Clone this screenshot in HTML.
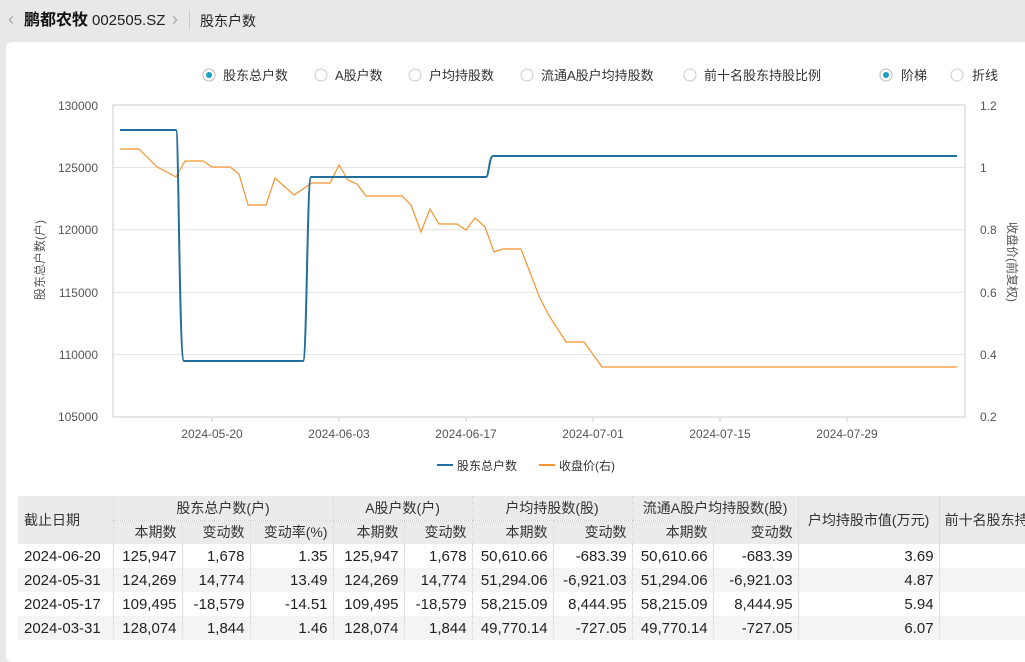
<!DOCTYPE html>
<html><head><meta charset="utf-8"><style>
body{margin:0;width:1025px;height:642px;overflow:hidden;background:#e8e8e8;font-family:"Liberation Sans","Noto Sans CJK SC",sans-serif;position:relative}
.top{position:absolute;left:0;top:0;height:42px;width:1025px}
.card{position:absolute;left:6px;top:42px;width:1030px;height:620px;background:#fff;border-radius:6px}
svg{position:absolute;left:0;top:0}
table{position:absolute;left:18px;top:496px;width:1021px;border-collapse:collapse;font-size:15px;color:#222;table-layout:fixed}
td{height:24px;padding:0 5px;text-align:right;white-space:nowrap;overflow:hidden;border-left:1px dotted #ccc;box-sizing:border-box}
td:first-child{border-left:none;text-align:left;padding-left:6px}
thead td{background:#ebebeb;color:#333;text-align:center;font-size:14px}
thead tr.s td{text-align:right}
tbody tr:nth-child(even) td{background:#f4f4f4}
</style></head><body>
<div class="top">
<span style="position:absolute;left:8px;top:9px;color:#aaa;font-size:18px;line-height:20px">‹</span>
<span style="position:absolute;left:24px;top:11px;font-size:16px;font-weight:bold;color:#111;line-height:20px">鹏都农牧</span>
<span style="position:absolute;left:92px;top:11px;font-size:15px;color:#222;line-height:20px">002505.SZ</span>
<span style="position:absolute;left:172px;top:9px;color:#aaa;font-size:18px;line-height:20px">›</span>
<div style="position:absolute;left:189px;top:10px;width:1px;height:20px;background:#ccc"></div>
<span style="position:absolute;left:200px;top:11px;font-size:14px;color:#222;line-height:20px">股东户数</span>
</div>
<div class="card"></div>
<svg width="1025" height="642" font-family="Liberation Sans, Noto Sans CJK SC, sans-serif">
<g font-size="13" fill="#333">
<circle cx="209" cy="75" r="6" fill="#fff" stroke="#bbb"/><circle cx="209" cy="75" r="3" fill="#1aa0c0"/><text x="223" y="80">股东总户数</text>
<circle cx="321" cy="75" r="6" fill="#fff" stroke="#ccc"/><text x="335" y="80">A股户数</text>
<circle cx="415" cy="75" r="6" fill="#fff" stroke="#ccc"/><text x="429" y="80">户均持股数</text>
<circle cx="527" cy="75" r="6" fill="#fff" stroke="#ccc"/><text x="541" y="80">流通A股户均持股数</text>
<circle cx="690" cy="75" r="6" fill="#fff" stroke="#ccc"/><text x="704" y="80">前十名股东持股比例</text>
<circle cx="886" cy="75" r="6" fill="#fff" stroke="#bbb"/><circle cx="886" cy="75" r="3" fill="#1aa0c0"/><text x="901" y="80">阶梯</text>
<circle cx="957" cy="75" r="6" fill="#fff" stroke="#ccc"/><text x="972" y="80">折线</text>
</g>
<g stroke="#e3e3e3"><line x1="113" y1="167.4" x2="965" y2="167.4"/><line x1="113" y1="229.8" x2="965" y2="229.8"/><line x1="113" y1="292.2" x2="965" y2="292.2"/><line x1="113" y1="354.6" x2="965" y2="354.6"/></g>
<rect x="113" y="105" width="852" height="312" fill="none" stroke="#ccc"/>
<g stroke="#ccc"><line x1="212" y1="417" x2="212" y2="422"/><line x1="339" y1="417" x2="339" y2="422"/><line x1="466" y1="417" x2="466" y2="422"/><line x1="593" y1="417" x2="593" y2="422"/><line x1="720" y1="417" x2="720" y2="422"/><line x1="847" y1="417" x2="847" y2="422"/></g>
<g font-size="12" fill="#555" text-anchor="end">
<text x="98" y="110">130000</text><text x="98" y="172">125000</text><text x="98" y="234">120000</text><text x="98" y="297">115000</text><text x="98" y="359">110000</text><text x="98" y="421">105000</text></g>
<g font-size="12" fill="#555">
<text x="980" y="110">1.2</text><text x="980" y="172">1</text><text x="980" y="234">0.8</text><text x="980" y="297">0.6</text><text x="980" y="359">0.4</text><text x="980" y="421">0.2</text></g>
<g font-size="12" fill="#555" text-anchor="middle">
<text x="212" y="438">2024-05-20</text><text x="339" y="438">2024-06-03</text><text x="466" y="438">2024-06-17</text><text x="593" y="438">2024-07-01</text><text x="720" y="438">2024-07-15</text><text x="847" y="438">2024-07-29</text></g>
<text font-size="12" fill="#555" text-anchor="middle" transform="translate(44,260) rotate(-90)">股东总户数(户)</text>
<text font-size="12" fill="#555" text-anchor="middle" transform="translate(1008,262) rotate(90)">收盘价(前复权)</text>
<polyline fill="none" stroke="#f7932e" stroke-width="1.2" points="120,149 139,149 157,167 165,171 176,177 185,161 203,161 212,167 230,167 239,174 248,205 266,205 275,178 294,195 312,183 330,183 339,165 348,180 357,184 366,196 402,196 411,205 421,232 430,209 439,224 457,224 466,230 475,218 485,227 494,252 503,249 521,249 539,296 548,314 557,328 566,342 584,342 602,367 957,367"/>
<path fill="none" stroke="#226f9e" stroke-width="2" d="M120,130 H176 C179,130 179,361 184,361 H303 C307,361 307,177 311,177 H486 C489,177 489,156 493,156 H957"/>
<line x1="437" y1="465" x2="453" y2="465" stroke="#226f9e" stroke-width="2"/><text x="457" y="470" font-size="12" fill="#333">股东总户数</text>
<line x1="539" y1="465" x2="555" y2="465" stroke="#f7932e" stroke-width="2"/><text x="559" y="470" font-size="12" fill="#333">收盘价(右)</text>
</svg>
<table>
<colgroup><col style="width:95px"><col style="width:69px"><col style="width:68px"><col style="width:83px"><col style="width:71px"><col style="width:68px"><col style="width:81px"><col style="width:79px"><col style="width:81px"><col style="width:85px"><col style="width:141px"><col style="width:100px"></colgroup>
<thead>
<tr><td rowspan="2" style="text-align:left">截止日期</td><td colspan="3" style="border-bottom:1px dotted #ccc">股东总户数(户)</td><td colspan="2" style="border-bottom:1px dotted #ccc">A股户数(户)</td><td colspan="2" style="border-bottom:1px dotted #ccc">户均持股数(股)</td><td colspan="2" style="border-bottom:1px dotted #ccc">流通A股户均持股数(股)</td><td rowspan="2" style="border-left:1px solid #ddd">户均持股市值(万元)</td><td rowspan="2" style="border-left:1px solid #ddd;text-align:left">前十名股东持股比例</td></tr>
<tr class="s"><td style="border-left:1px dotted #ccc">本期数</td><td>变动数</td><td>变动率(%)</td><td>本期数</td><td>变动数</td><td>本期数</td><td>变动数</td><td>本期数</td><td>变动数</td></tr>
</thead>
<tbody>
<tr><td>2024-06-20</td><td>125,947</td><td>1,678</td><td>1.35</td><td>125,947</td><td>1,678</td><td>50,610.66</td><td>-683.39</td><td>50,610.66</td><td>-683.39</td><td>3.69</td><td></td></tr>
<tr><td>2024-05-31</td><td>124,269</td><td>14,774</td><td>13.49</td><td>124,269</td><td>14,774</td><td>51,294.06</td><td>-6,921.03</td><td>51,294.06</td><td>-6,921.03</td><td>4.87</td><td></td></tr>
<tr><td>2024-05-17</td><td>109,495</td><td>-18,579</td><td>-14.51</td><td>109,495</td><td>-18,579</td><td>58,215.09</td><td>8,444.95</td><td>58,215.09</td><td>8,444.95</td><td>5.94</td><td></td></tr>
<tr><td>2024-03-31</td><td>128,074</td><td>1,844</td><td>1.46</td><td>128,074</td><td>1,844</td><td>49,770.14</td><td>-727.05</td><td>49,770.14</td><td>-727.05</td><td>6.07</td><td></td></tr>
</tbody></table>
</body></html>
